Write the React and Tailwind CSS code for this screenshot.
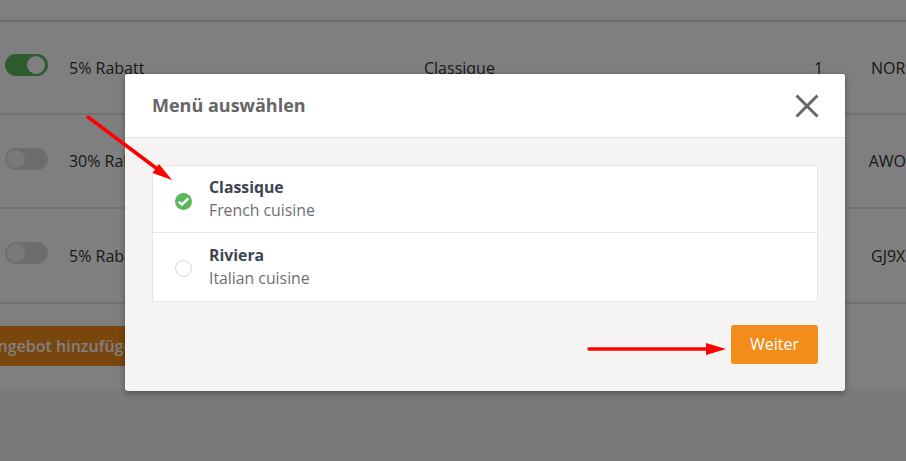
const rows = [
  { on: true, name: '5% Rabatt', menu: 'Classique', qty: '1', code: 'NOR', height: 'h-[93px]' },
  { on: false, name: '30% Rabatt', menu: 'Classique', qty: '1', code: 'AWO', height: 'h-[94px]' },
  { on: false, name: '5% Rabatt', menu: 'Riviera', qty: '1', code: 'GJ9X', height: 'h-[95px]' },
];

const menus = [
  { name: 'Classique', sub: 'French cuisine', selected: true, rowClass: 'h-[66px]' },
  { name: 'Riviera', sub: 'Italian cuisine', selected: false, rowClass: 'h-[69px] border-t border-[#e6e5e3] pb-px' },
];

function Toggle({ on }) {
  return (
    <div className={`mb-[5px] flex h-[22px] w-[43px] items-center rounded-full border-2 ${on ? 'justify-end border-[#5cb85c] bg-[#5cb85c]' : 'justify-start border-[#dcdcdc] bg-[#d9d9d9]'}`}>
      <div className={`h-[18px] w-[18px] rounded-full ${on ? 'mr-px bg-white' : 'bg-[#f2f2f2]'}`} />
    </div>
  );
}

function Radio({ selected }) {
  if (!selected) return <div className="mt-[4px] h-[17px] w-[17px] rounded-full border border-[#d6d6d6] bg-white" />;
  return (
    <svg className="mt-[4px]" width="17" height="17" viewBox="0 0 17 17">
      <circle cx="8.5" cy="8.5" r="8.500" fill="#5cb85c" />
      <path d="M3.700 8.600l3.300 3 6.300-6.200" fill="none" stroke="#fff" strokeWidth="2.400" />
    </svg>
  );
}

export default function App() {
  return (
    <div className="relative h-[461px] w-[906px] overflow-hidden bg-white font-['Open_Sans',sans-serif]">
      <div className="h-[22px] border-b-2 border-[#d8d8d8]" />
      {rows.map((row, i) => (
        <div key={i} className={`flex ${row.height} items-center border-b-2 border-[#e4e4e4] pl-[5px] text-base text-[#333]`}>
          <Toggle on={row.on} />
          <div className="ml-[21px] w-[355px]">{row.name}</div>
          <div className="w-[390px]">{row.menu}</div>
          <div className="w-[57px]">{row.qty}</div>
          <div>{row.code}</div>
        </div>
      ))}
      <div className="h-[85px] pt-[22px]">
        <button className="-ml-[33px] h-10 w-[300px] whitespace-nowrap rounded-[3px] bg-[#f28c1a] pl-5 text-left text-base font-semibold text-white">
          Angebot hinzufügen
        </button>
      </div>
      <div className="h-[72px] bg-[#f5f4f2]" />

      <div className="absolute inset-0 bg-black/50" />

      <div className="absolute left-[125px] top-[74px] w-[720px] overflow-hidden rounded-[3px] bg-[#f5f4f2] shadow-[0_2px_6px_rgba(0,0,0,0.35)]">
        <div className="flex h-[64px] items-center justify-between border-b border-[#e2e2e2] bg-white pl-[27px] pr-[26px]">
          <h2 className="text-[18px] font-bold text-[#666]">Menü auswählen</h2>
          <svg width="24" height="24" viewBox="0 0 24 24">
            <path d="M1.5 1.5l21 21M22.5 1.5l-21 21" fill="none" stroke="#666" strokeWidth="3" />
          </svg>
        </div>
        <div className="p-[27px]">
          <div className="border border-[#e6e5e3] bg-white">
            {menus.map((m) => (
              <div key={m.name} className={`flex items-center pl-[22px] ${m.rowClass}`}>
                <Radio selected={m.selected} />
                <div className="ml-[17px] text-[15.8px] leading-[23px]">
                  <div className="font-bold text-[#3d4452]">{m.name}</div>
                  <div className="text-[#6f6f6f]">{m.sub}</div>
                </div>
              </div>
            ))}
          </div>
          <div className="mt-[23px] flex justify-end">
            <button className="h-[39px] w-[87px] rounded-[3px] bg-[#f28c1a] pb-px text-base text-white">
              Weiter
            </button>
          </div>
        </div>
      </div>

      <svg className="pointer-events-none absolute inset-0" width="906" height="461" viewBox="0 0 906 461">
        <path d="M88 117L160 171" stroke="#f00" strokeWidth="3.5" strokeLinecap="round" />
        <path d="M172 180L152.500 173L159 164Z" fill="#f00" />
        <path d="M589 349H708" stroke="#f00" strokeWidth="3.500" strokeLinecap="round" />
        <path d="M726 349L706 343V355Z" fill="#f00" />
      </svg>
    </div>
  );
}
